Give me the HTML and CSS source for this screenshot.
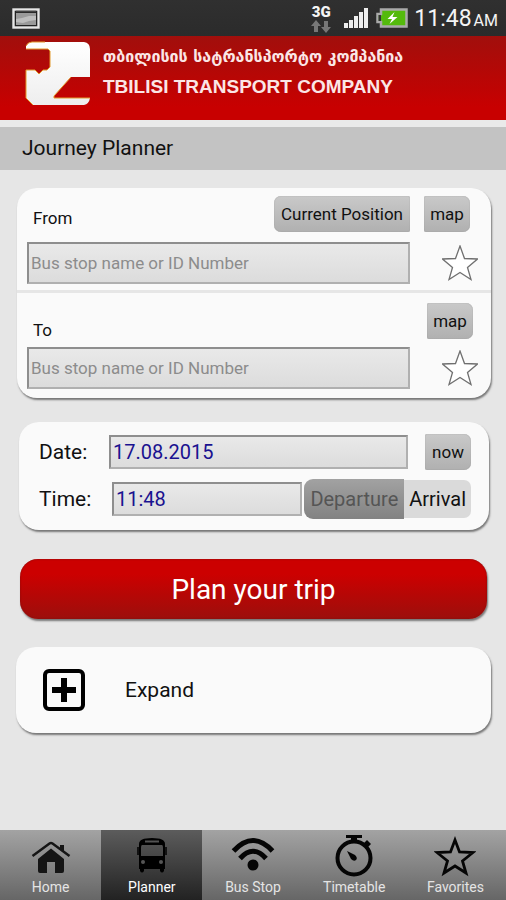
FILE: index.html
```html
<!DOCTYPE html>
<html lang="en">
<head>
<meta charset="utf-8">
<meta name="viewport" content="width=device-width, initial-scale=1">
<title>Journey Planner</title>
<link rel="stylesheet" href="styles.css">
</head>
<body>
<div class="status">
  <svg class="status-shot" width="28" height="21" viewBox="0 0 28 21" aria-hidden="true">
    <rect x="1.5" y="1.5" width="25" height="18" fill="#222" stroke="#e6e6e6" stroke-width="2.4"/>
    <rect x="4" y="5" width="20" height="12" fill="#9a9a9a"/>
    <path d="M4 11l6-1 7-2h7v4l-7 1-6 2-7-1z" fill="#bdbdbd"/>
    <path d="M4 3.500h20" stroke="#444" stroke-width="1.500"/>
  </svg>
  <div class="status-net">
    <span class="status-3g">3G</span>
    <svg width="20" height="13" viewBox="0 0 20 13" fill="#777" aria-hidden="true">
      <path d="M5 0l5 6H7v6H3V6H0zM15 13l5-6h-3V1h-4v6h-3z"/>
    </svg>
  </div>
  <svg class="status-signal" width="24" height="20" viewBox="0 0 24 20" fill="#eee" aria-hidden="true">
    <path d="M0 15h4v5H0zM5 12h4v8H5zM10 8h4v12h-4zM15 4h4v16h-4zM20 0h4v20h-4z"/>
  </svg>
  <svg class="status-battery" width="32" height="20" viewBox="0 0 32 20" aria-hidden="true">
    <path d="M5 1.500h25.500v17H5V14H1.500V6H5z" fill="#54ba0c" stroke="#aaa" stroke-width="2.500"/>
    <path d="M2.500 7H5v6H2.500z" fill="#333"/>
    <path d="M18.500 4l-7 7h4.500l-2.500 5 8-7h-5z" fill="#fff"/>
  </svg>
  <div class="status-time"><span>11:48</span><small>AM</small></div>
</div>

<header class="brand">
  <svg class="brand-logo" width="66" height="66" viewBox="0 0 66 66" aria-hidden="true">
    <defs><linearGradient id="logo" x2="0" y2="1"><stop offset="0" stop-color="#fff"/><stop offset="1" stop-color="#eee"/></linearGradient></defs>
    <path d="M1 5Q3 1 7 1H59Q65 2 65 8V36H46L29 55V57H65Q64 63 59 64H8L1 57V29H10L14 33L18 29H22L25 26V10L23 8H1Z" fill="url(#logo)"/>
    <path d="M1 5Q3 1 7 1H20M1 8H23L25 10V26L22 29H18L14 33L10 29H1V57L8 64M46 36L29 55V57H65" fill="none" stroke="#e29a2c" stroke-width="1"/>
  </svg>
  <div class="brand-names">
    <span class="brand-ka" lang="ka">თბილისის სატრანსპორტო კომპანია</span>
    <span class="brand-en">TBILISI TRANSPORT COMPANY</span>
  </div>
</header>

<h1 class="page-title">Journey Planner</h1>

<main class="content">
  <form class="planner">
    <div class="card stops">
      <section class="stop stop-from">
        <div class="stop-head">
          <label for="from">From</label>
          <button type="button" class="btn btn-left">Current Position</button>
          <button type="button" class="btn btn-right">map</button>
        </div>
        <div class="stop-row">
          <input id="from" class="field" type="text" placeholder="Bus stop name or ID Number">
          <button type="button" class="star" aria-label="Favorite">
            <svg width="36" height="36" viewBox="0 0 36 36" aria-hidden="true"><path d="M18 1l4.500 12.500 13 .5-10 8.500 3.500 12-11-7-11 7 3.500-12-10-8.500 13-.5z"/></svg>
          </button>
        </div>
      </section>
      <section class="stop stop-to">
        <div class="stop-head">
          <label for="to">To</label>
          <button type="button" class="btn btn-right">map</button>
        </div>
        <div class="stop-row">
          <input id="to" class="field" type="text" placeholder="Bus stop name or ID Number">
          <button type="button" class="star" aria-label="Favorite">
            <svg width="36" height="36" viewBox="0 0 36 36" aria-hidden="true"><path d="M18 1l4.500 12.500 13 .5-10 8.500 3.500 12-11-7-11 7 3.500-12-10-8.500 13-.5z"/></svg>
          </button>
        </div>
      </section>
    </div>

    <div class="card when">
      <div class="when-row">
        <label for="date">Date:</label>
        <input id="date" class="field" type="text" value="17.08.2015">
        <button type="button" class="btn btn-right btn-now">now</button>
      </div>
      <div class="when-row when-time">
        <label for="time">Time:</label>
        <input id="time" class="field" type="text" value="11:48">
        <div class="toggle">
          <button type="button" class="toggle-on" aria-pressed="true">Departure</button>
          <button type="button" class="toggle-off" aria-pressed="false">Arrival</button>
        </div>
      </div>
    </div>

    <button type="submit" class="plan">Plan your trip</button>
  </form>

  <button type="button" class="card expand">
    <svg width="44" height="44" viewBox="0 0 44 44" aria-hidden="true">
      <rect x="3" y="3" width="38" height="38" rx="4" fill="none" stroke="#000" stroke-width="4"/>
      <path d="M22 10v24M10 22h24" stroke="#000" stroke-width="6"/>
    </svg>
    <span>Expand</span>
  </button>
</main>

<nav class="tabs">
  <a href="#home">
    <svg width="40" height="42" viewBox="0 0 40 42" aria-hidden="true">
      <path d="M20 13.500L7 24V36Q7 38 9 38H16V27H24V38H31Q33 38 33 36V24Z" fill="#151515"/>
      <path d="M1.500 21L18.500 8.500Q20 7.500 21.500 8.500L38.500 21" fill="none" stroke="#151515" stroke-width="2.500"/>
      <path d="M29 10h4v7l-4-3z" fill="#151515"/>
    </svg>
    <span>Home</span>
  </a>
  <a href="#planner" class="active" aria-current="page">
    <svg width="40" height="42" viewBox="0 0 40 42" aria-hidden="true">
      <path fill="#000" fill-rule="evenodd" d="M7 9Q7 3 20 3Q33 3 33 9V34H32V36Q30 39 28 36V34H12V36Q10 39 8 36V34H7ZM13 5.500V7.500H27V5.500ZM10 10Q9 10 9 13V21H31V13Q31 10 30 10Z"/>
      <circle cx="11" cy="27" r="2" fill="#555"/><circle cx="29" cy="27" r="2" fill="#555"/>
      <path d="M6 12v8M34 12v8" stroke="#000" stroke-width="1.500"/>
    </svg>
    <span>Planner</span>
  </a>
  <a href="#stop">
    <svg width="44" height="42" viewBox="0 0 44 42" aria-hidden="true">
      <g fill="none" stroke="#050505" stroke-width="5"><path d="M2.500 16Q22 -5 41.500 16"/><path d="M9 23.500Q22 9 35 23.500"/></g>
      <circle cx="22" cy="30" r="5.500" fill="#050505"/>
    </svg>
    <span>Bus Stop</span>
  </a>
  <a href="#timetable">
    <svg width="40" height="42" viewBox="0 0 40 42" aria-hidden="true">
      <circle cx="20" cy="23" r="16.500" fill="none" stroke="#050505" stroke-width="4"/>
      <path d="M12 0h16v3h-5v4h-6V3h-5zM30 8l3-3 4 4-3 3z" fill="#050505"/>
      <path d="M13 16l8 4q3 3 1 5t-5-1z" fill="#050505"/>
    </svg>
    <span>Timetable</span>
  </a>
  <a href="#favorites">
    <svg width="42" height="42" viewBox="0 0 42 42" aria-hidden="true">
      <path d="M21 5l4.500 12 13.500 .5-10.500 8.500 3.500 12L21 31l-11 7 3.500-12L3 17.500l13.500-.5z" fill="none" stroke="#050505" stroke-width="2.800"/>
    </svg>
    <span>Favorites</span>
  </a>
</nav>
</body>
</html>
```
FILE: styles.css
```css
* { box-sizing: border-box; }

body {
  margin: 0;
  min-height: 100vh;
  display: flex;
  flex-direction: column;
  background: #e6e6e6;
  color: #111;
  font-family: Roboto, "Liberation Sans", sans-serif;
  font-size: 17px;
}

button, input { font: inherit; color: inherit; margin: 0; }
button { border: 0; padding: 0; }
svg { flex: none; display: block; }

/* Device status bar */
.status {
  height: 36px;
  display: flex;
  align-items: center;
  padding: 0 8px 0 12px;
  background: linear-gradient(#303030, #2b2b2b);
  color: #f4f4f4;
}
.status-shot { margin-right: auto; }
.status-net {
  display: flex;
  flex-direction: column;
  align-items: center;
  margin-right: 13px;
}
.status-3g { font-size: 15px; line-height: 16px; font-weight: 900; }
.status-signal { margin-right: 8px; }
.status-battery { margin-right: 6px; }
.status-time {
  display: flex;
  align-items: baseline;
  gap: 2px;
  padding-top: 3px;
  font-size: 23px;
  line-height: 33px;
}
.status-time small { font-size: 16px; }

/* Company banner */
.brand {
  height: 84px;
  display: flex;
  align-items: flex-start;
  gap: 12px;
  padding: 5px 24px 0 25px;
  background: linear-gradient(#a10f0c, #c80000 85%);
  color: #fbe6e6;
}
.brand-names { display: flex; flex-direction: column; white-space: nowrap; }
.brand-ka {
  font-family: "DejaVu Sans", sans-serif;
  font-size: 16px;
  font-weight: bold;
  line-height: 32px;
}
.brand-en {
  font-family: "Liberation Sans", sans-serif;
  font-size: 19px;
  line-height: 27px;
  font-weight: bold;
}

.page-title {
  margin: 0;
  padding: 0 22px;
  border-top: 7px solid #eaeaea;
  background: #c3c3c3;
  font-size: 21px;
  line-height: 43px;
  font-weight: 400;
}

.content { flex: 1; padding: 18px 15px 28px 16px; }

.card {
  background: #fafafa;
  border-radius: 20px;
  box-shadow: 1px 2px 2px #777;
}

/* From / To */
.stops { margin: 0 0 24px 1px; }
.stop { padding: 8px 13px 6px 10px; }
.stop-from { border-bottom: 3px solid #e6e6e6; }
.stop-to { padding-top: 10px; padding-bottom: 9px; }
.stop-head {
  display: flex;
  align-items: center;
  gap: 14px;
  padding: 0 8px 0 6px;
  margin-bottom: 10px;
}
.stop-head label { margin-right: auto; padding-top: 8px; }
.stop-to .stop-head { height: 36px; padding-right: 5px; margin-bottom: 8px; }
.stop-to label { padding-top: 18px; }
.stop-row { display: flex; align-items: center; }
.stop-row .field { flex: 1; height: 42px; }

.field {
  min-width: 0;
  border: 2px solid;
  border-color: #8e8e8e #b0b0b0 #b0b0b0 #8e8e8e;
  border-radius: 0;
  padding: 0 2px;
  background: linear-gradient(#e9e9e9, #dcdcdc);
}
.field::placeholder { color: #8c8c8c; opacity: 1; }

.btn {
  height: 36px;
  padding: 0 6px;
  background: linear-gradient(#c9c9c9, #b0b0b0);
  font-size: 17px;
  box-shadow: inset 0 0 1px #888;
}
.btn-left { padding: 0 7px; border-radius: 7px 2px 2px 7px; }
.btn-right { border-radius: 2px 7px 7px 2px; min-width: 46px; }

.star { margin-left: 32px; background: none; }
.star path { fill: #fff; stroke: #707070; stroke-width: 1.3; }

/* Date and time */
.when { margin: 0 2px 29px 3px; padding: 12px 18px 11px 20px; }
.when-row { display: flex; align-items: center; font-size: 21px; }
.when-row label { width: 70px; flex: none; }
.when-row .field { flex: 1; height: 34px; color: #1a1290; font-size: 20px; }
.btn-now { margin-left: 17px; }
.when-time { margin-top: 9px; }
.when-row.when-time label { width: 73px; }
.toggle { display: flex; align-items: center; margin-left: 2px; font-size: 20px; }
.toggle-on {
  height: 40px;
  padding: 0 6px;
  border-radius: 9px 0 0 9px;
  background: linear-gradient(#a2a2a2, #828282);
  color: #555;
}
.toggle-off {
  height: 38px;
  padding: 0 5px;
  border-radius: 0 7px 7px 0;
  background: #dadada;
}

.plan {
  display: block;
  width: calc(100% - 8px);
  height: 60px;
  margin: 0 4px 28px;
  border-radius: 18px;
  background: linear-gradient(#cc0000 25%, #9c0f0c);
  box-shadow: 1px 2px 2px #777, inset 0 0 2px #7a1010;
  color: #fff;
  font-size: 28px;
}

.expand {
  width: 100%;
  height: 86px;
  display: flex;
  align-items: center;
  gap: 39px;
  padding: 0 26px;
  font-size: 21px;
}

/* Bottom tabs */
.tabs { display: flex; background: linear-gradient(#a3a3a3, #666); }
.tabs a {
  flex: 1;
  height: 70px;
  display: flex;
  flex-direction: column;
  align-items: center;
  padding-top: 5px;
  color: #e4e4e4;
  font-size: 14px;
  line-height: 20px;
  text-decoration: none;
}
.tabs .active { background: linear-gradient(#5c5c5c, #222); color: #fff; }
```
